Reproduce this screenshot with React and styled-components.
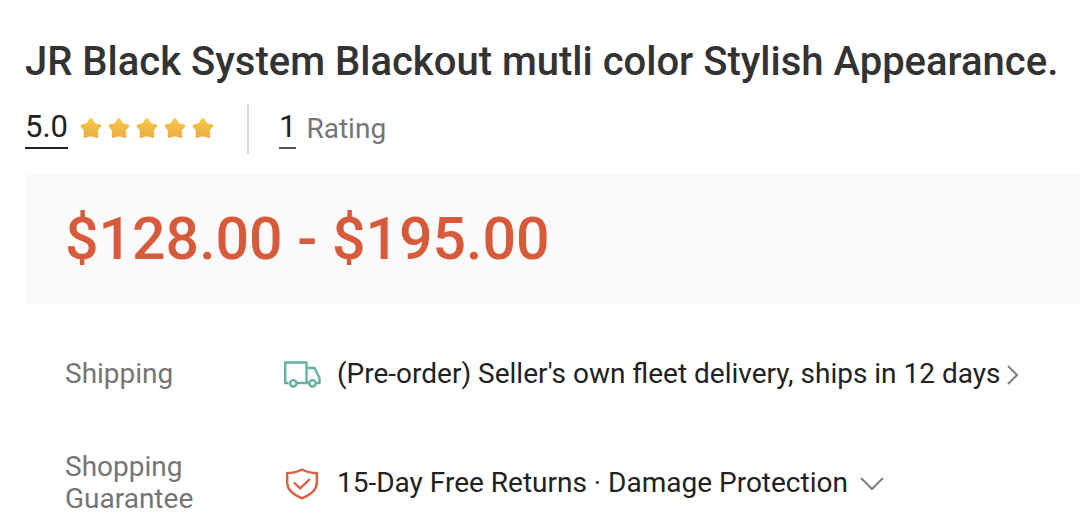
import React from "react";
import styled, { createGlobalStyle } from "styled-components";

const GlobalStyle = createGlobalStyle`
  * {
    box-sizing: border-box;
  }
  body {
    margin: 0;
    background-color: #fff;
    color: #222;
    font-family: Roboto, "Liberation Sans", sans-serif;
    overflow-x: hidden;
  }
`;

const Page = styled.main`
  padding: 38px 0 0 25px;
`;

const Title = styled.h1`
  margin: 0;
  font-size: 40px;
  font-weight: 500;
  line-height: 48px;
  color: #333;
  white-space: nowrap;
`;

const RatingBar = styled.div`
  display: flex;
  align-items: center;
  height: 50px;
  margin: 18px 0 20px;
`;

const RatingButton = styled.button`
  display: flex;
  align-items: center;
  height: 50px;
  padding: 0 0 2px;
  border: 0;
  background: none;
  color: #222;
  font-family: inherit;
  cursor: pointer;
`;

const Score = styled.span`
  border-bottom: 2px solid ${props => props.line};
  font-size: 31px;
  line-height: 40px;
`;

const Stars = styled.span`
  display: flex;
  gap: 6px;
  margin-left: 12px;
`;

const Separator = styled.span`
  width: 2px;
  height: 50px;
  margin: 0 30px 0 33px;
  background-color: #dbdbdb;
`;

const RatingLabel = styled.span`
  margin-left: 10px;
  color: #767676;
  font-size: 28px;
`;

const PriceBox = styled.section`
  display: flex;
  align-items: center;
  height: 130px;
  padding: 0 40px;
  background-color: #fafafa;
`;

const Price = styled.div`
  color: #d75a3a;
  font-size: 59px;
  font-weight: 500;
  line-height: 72px;
  white-space: nowrap;
`;

const Details = styled.section`
  display: grid;
  gap: 45px;
  padding: 38px 0 0 40px;
`;

const DetailRow = styled.div`
  display: grid;
  grid-template-columns: 218px 1fr;
  align-items: center;
  min-height: 64px;
`;

const DetailLabel = styled.h2`
  max-width: 160px;
  margin: 0;
  color: #757575;
  font-size: 28px;
  font-weight: 400;
  line-height: 32px;
`;

const DetailButton = styled.button`
  display: flex;
  align-items: center;
  padding: 0;
  border: 0;
  background: none;
  color: #222;
  font-family: inherit;
  font-size: 28px;
  line-height: 32px;
  white-space: nowrap;
  cursor: pointer;
`;

const DetailIcon = styled.svg`
  flex: none;
  width: 40px;
  height: 36px;
  margin-right: 14px;
  fill: none;
  stroke: ${props => props.color};
  stroke-width: 2.4;
  stroke-linejoin: round;
`;

const Arrow = styled.svg`
  flex: none;
  width: 24px;
  height: 24px;
  margin-left: ${props => props.$gap};
  fill: none;
  stroke: #808080;
  stroke-width: 2;
`;

const Star = () => (
  <svg width="22" height="22" viewBox="0 0 22 22">
    <defs>
      <linearGradient id="star" x1="0" y1="0" x2="0" y2="1">
        <stop offset="0" stopColor="#f3cb46" />
        <stop offset="1" stopColor="#eeac47" />
      </linearGradient>
    </defs>
    <path
      fill="url(#star)"
      d="M9.6 1.5Q10.8 .3 12 1.5L14.6 5.6Q15.1 6.3 15.9 6.5L20.2 7.5Q22 8.3 20.9 9.8L18.2 13Q17.7 13.7 17.8 14.5L18.2 19.4Q18 21.3 16 20.8L12 19.6Q10.8 19.3 9.6 19.6L5.8 20.8Q3.8 21.3 3.6 19.4L4 14.5Q4 13.7 3.5 13L.8 9.8Q-.2 8.3 1.5 7.5L5.8 6.5Q6.6 6.3 7.1 5.6Z"
    />
  </svg>
);

const App = () => (
  <>
    <GlobalStyle />
    <Page>
      <Title>JR Black System Blackout mutli color Stylish Appearance.</Title>
      <RatingBar>
        <RatingButton type="button">
          <Score line="#222">5.0</Score>
          <Stars>
            {[1, 2, 3, 4, 5].map(i => (
              <Star key={i} />
            ))}
          </Stars>
        </RatingButton>
        <Separator />
        <RatingButton type="button">
          <Score line="#555">1</Score>
          <RatingLabel>Rating</RatingLabel>
        </RatingButton>
      </RatingBar>
      <PriceBox>
        <Price>$128.00 - $195.00</Price>
      </PriceBox>
      <Details>
        <DetailRow>
          <DetailLabel>Shipping</DetailLabel>
          <DetailButton type="button">
            <DetailIcon viewBox="0 0 40 36" color="#63b2a1">
              <path d="M5.5 27H2.2V6.5H23.5V27H13.5M23.5 12H31.5L36.5 22V27H33.5M23.5 27H26" />
              <circle cx="10.3" cy="27.3" r="3.2" />
              <circle cx="29.5" cy="27.3" r="3.2" />
            </DetailIcon>
            (Pre-order) Seller's own fleet delivery, ships in 12 days
            <Arrow viewBox="0 0 24 24" $gap="2px">
              <path d="M6 4L15 13L6 22" />
            </Arrow>
          </DetailButton>
        </DetailRow>
        <DetailRow>
          <DetailLabel>Shopping Guarantee</DetailLabel>
          <DetailButton type="button">
            <DetailIcon viewBox="0 0 40 36" color="#dc6042">
              <path d="M19 4.5C23.5 7 28 8 33.8 8V18C33.8 25.5 27.5 29.8 19 33.3C10.5 29.8 4.2 25.5 4.2 18V8C10 8 14.5 7 19 4.5Z" />
              <path d="M11 17.5L17.2 23.4L26.8 14" />
            </DetailIcon>
            15-Day Free Returns · Damage Protection
            <Arrow viewBox="0 0 24 24" $gap="12px">
              <path d="M1 7L12 18L23 7" />
            </Arrow>
          </DetailButton>
        </DetailRow>
      </Details>
    </Page>
  </>
);

export default App;
